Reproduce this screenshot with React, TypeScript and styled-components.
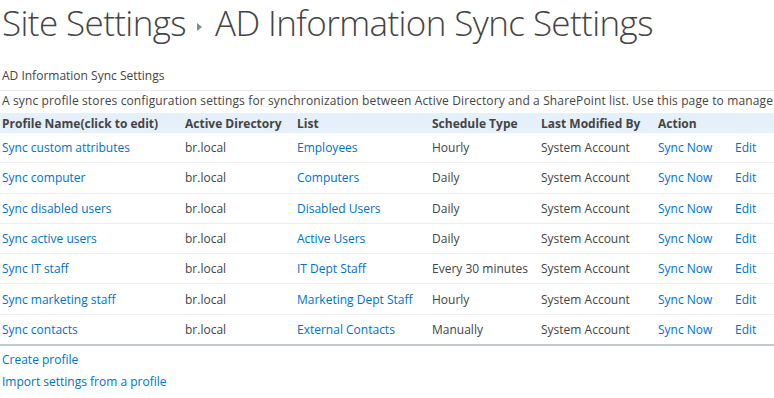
import styled, { createGlobalStyle } from "styled-components";

type Profile = {
  name: string;
  directory: string;
  list: string;
  schedule: string;
  modifiedBy: string;
};

const profiles: Profile[] = [
  { name: "Sync custom attributes", directory: "br.local", list: "Employees", schedule: "Hourly", modifiedBy: "System Account" },
  { name: "Sync computer", directory: "br.local", list: "Computers", schedule: "Daily", modifiedBy: "System Account" },
  { name: "Sync disabled users", directory: "br.local", list: "Disabled Users", schedule: "Daily", modifiedBy: "System Account" },
  { name: "Sync active users", directory: "br.local", list: "Active Users", schedule: "Daily", modifiedBy: "System Account" },
  { name: "Sync IT staff", directory: "br.local", list: "IT Dept Staff", schedule: "Every 30 minutes", modifiedBy: "System Account" },
  { name: "Sync marketing staff", directory: "br.local", list: "Marketing Dept Staff", schedule: "Hourly", modifiedBy: "System Account" },
  { name: "Sync contacts", directory: "br.local", list: "External Contacts", schedule: "Manually", modifiedBy: "System Account" },
];

// column widths (content box, each cell adds 2px left padding)
const columns = [
  { label: "Profile Name(click to edit)", width: 181 },
  { label: "Active Directory", width: 110 },
  { label: "List", width: 133 },
  { label: "Schedule Type", width: 107 },
  { label: "Last Modified By", width: 115 },
  { label: "Action", width: 75 },
  { label: "", width: 58 },
];

const GlobalStyle = createGlobalStyle`
  body {
    margin: 0;
    background: #fff;
    font-family: "Open Sans", "Noto Sans", sans-serif;
    color: #444;
    overflow: hidden;
  }
`;

export default function App() {
  return (
    <>
      <GlobalStyle />
      <Page>
        <Title>
          Site Settings
          <Crumb viewBox="0 0 6 8">
            <path d="M0 0 L5 4 L0 8 Z" fill="#7f8c99" />
          </Crumb>
          AD Information Sync Settings
        </Title>
        <SectionTitle>AD Information Sync Settings</SectionTitle>
        <Description>
          A sync profile stores configuration settings for synchronization between Active Directory and a
          SharePoint list. Use this page to manage
        </Description>
        <Grid>
          <thead>
            <HeadRow>
              {columns.map((c, i) => (
                <HeadCell key={i} $w={c.width}>
                  {c.label}
                </HeadCell>
              ))}
            </HeadRow>
          </thead>
          <tbody>
            {profiles.map((p) => (
              <Row key={p.name}>
                <Cell><Link href="#">{p.name}</Link></Cell>
                <Cell>{p.directory}</Cell>
                <Cell><Link href="#">{p.list}</Link></Cell>
                <Cell>{p.schedule}</Cell>
                <Cell>{p.modifiedBy}</Cell>
                <Cell><Link href="#">Sync Now</Link></Cell>
                <Cell><Link href="#">Edit</Link></Cell>
              </Row>
            ))}
          </tbody>
        </Grid>
        <Footer>
          <Link href="#">Create profile</Link>
          <Link href="#">Import settings from a profile</Link>
        </Footer>
      </Page>
    </>
  );
}

const Page = styled.div`
  width: 772px;
  padding: 0 0 0 2px;
  display: flex;
  flex-direction: column;
  align-items: flex-start;
  font-size: 12px;
`;

const Title = styled.h1`
  margin: 0;
  height: 46px;
  font-size: 35px;
  font-weight: 300;
  line-height: 46px;
  color: #444;
  white-space: nowrap;
  letter-spacing: -0.6px;
`;

const Crumb = styled.svg`
  width: 6px;
  height: 8px;
  margin: 0 12px 0 11px;
  vertical-align: middle;
`;

const SectionTitle = styled.div`
  align-self: stretch;
  margin-top: 21px;
  margin-left: -2px;
  padding: 0 0 5px 2px;
  line-height: 18px;
  border-bottom: 1px solid #ebebeb;
`;

const Description = styled.div`
  line-height: 20px;
  white-space: nowrap;
  letter-spacing: 0.13px;
`;

const Grid = styled.table`
  flex-shrink: 0;
  width: 793px;
  border-collapse: collapse;
  table-layout: fixed;
  margin: 2px 0 0 -2px;
  border-bottom: 2px solid #c6c9cc;
`;

const HeadRow = styled.tr`
  background: #e5f0fa;
`;

const HeadCell = styled.th<{ $w: number }>`
  width: ${(p) => p.$w}px;
  height: 20px;
  padding: 0 0 0 2px;
  text-align: left;
  font-weight: 700;
  color: #444;
  white-space: nowrap;
`;

const Row = styled.tr`
  & + & {
    border-top: 1px solid #ededed;
  }
`;

const Cell = styled.td`
  height: 29.3px;
  padding: 0 0 0 2px;
  white-space: nowrap;
  vertical-align: middle;
`;

const Link = styled.a`
  color: #0072c6;
  text-decoration: none;
`;

const Footer = styled.div`
  display: flex;
  flex-direction: column;
  gap: 2px;
  padding-top: 4px;
  line-height: 20px;
`;
